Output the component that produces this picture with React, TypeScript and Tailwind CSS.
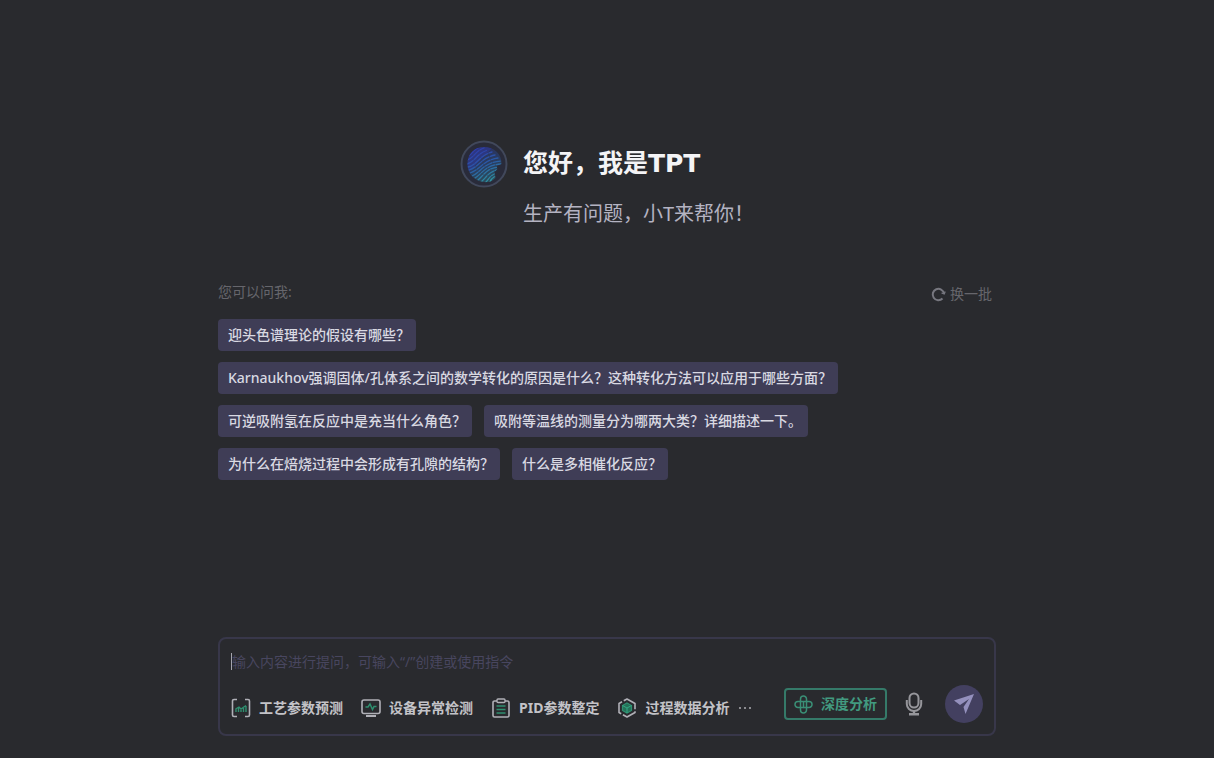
import { useState } from "react";

const FONT = "font-['Noto_Sans','Noto_Sans_CJK_SC',sans-serif]";

const QUESTIONS: string[][] = [
  ["迎头色谱理论的假设有哪些？"],
  ["Karnaukhov强调固体/孔体系之间的数学转化的原因是什么？这种转化方法可以应用于哪些方面？"],
  ["可逆吸附氢在反应中是充当什么角色？", "吸附等温线的测量分为哪两大类？详细描述一下。"],
  ["为什么在焙烧过程中会形成有孔隙的结构？", "什么是多相催化反应？"],
];

function Logo() {
  return (
    <svg width="48" height="48" viewBox="0 0 48 48" fill="none" aria-hidden="true">
      <defs>
        <linearGradient id="print" x1="16" y1="8" x2="30" y2="42" gradientUnits="userSpaceOnUse">
          <stop stopColor="#2f3cae" />
          <stop offset="0.5" stopColor="#2a5aa6" />
          <stop offset="1" stopColor="#2f94a0" />
        </linearGradient>
        <clipPath id="printClip">
          <path d="M24 7C14 7 7.500 14 7.500 24c0 8 5 15 13 17.500 5 1.500 12 .5 15-3.500l-1-6 3-3-1-3 5-2C42 14 34 7 24 7Z" />
        </clipPath>
      </defs>
      <circle cx="24" cy="24" r="22.500" fill="#292b3a" stroke="#41485b" strokeWidth="2" />
      <g clipPath="url(#printClip)">
        <rect x="7" y="7" width="35" height="35" fill="url(#print)" opacity=".35" />
        <path d="M7 7h26L7 34Z" fill="#2d38a0" opacity=".5" />
        <g stroke="url(#print)" strokeWidth="1.300" strokeLinecap="round" strokeDasharray="7 1.500">
          <path d="M8 16c4-1 5-6 10-8M7 20c6-1 8-9 17-12M7 24c8-2 10-11 21-14M8 27c9-2 12-12 24-15M9 30c10-3 12-12 26-15M10 33c10-3 13-13 28-15M12 36c8-3 12-14 29-15M15 38c7-4 10-13 26-14M18 40c5-4 9-12 20-13M22 41c4-3 6-9 15-11M26 42c3-3 4-7 11-9M30 42c1-3 3-5 6-6" />
        </g>
      </g>
    </svg>
  );
}

function PredictIcon() {
  return (
    <svg width="20" height="20" viewBox="0 0 20 20" fill="none" aria-hidden="true">
      <path d="M6 1.500H3A1.500 1.500 0 0 0 1.500 3v14A1.500 1.500 0 0 0 3 18.500h3M14 1.500h3A1.500 1.500 0 0 1 18.500 3v14a1.500 1.500 0 0 1-1.500 1.500h-3" stroke="#b0b0b7" strokeWidth="1.600" />
      <path d="M5 14v-3M7.500 14v-4M10 14v-2M12.500 14v-4M15 14V8M4.500 11l3.500-2 2 2 5-3.500" stroke="#2f8f70" strokeWidth="1.400" />
    </svg>
  );
}

function MonitorIcon() {
  return (
    <svg width="20" height="20" viewBox="0 0 20 20" fill="none" aria-hidden="true">
      <rect x="1" y="2" width="18" height="13.500" rx="2" stroke="#b0b0b7" strokeWidth="1.600" />
      <path d="M5 18h10" stroke="#b0b0b7" strokeWidth="2" />
      <path d="M4.500 9H7l2-3 2.500 5.500L13 8.500h2.500" stroke="#2f8f70" strokeWidth="1.500" />
    </svg>
  );
}

function ClipboardIcon() {
  return (
    <svg width="20" height="20" viewBox="0 0 20 20" fill="none" aria-hidden="true">
      <path d="M6 3H3.500A1.500 1.500 0 0 0 2 4.500v13A1.500 1.500 0 0 0 3.500 19h13a1.500 1.500 0 0 0 1.500-1.500v-13A1.500 1.500 0 0 0 16.500 3H14" stroke="#b0b0b7" strokeWidth="1.600" />
      <rect x="6" y="1" width="8" height="3.500" rx="1" stroke="#b0b0b7" strokeWidth="1.400" />
      <path d="M5.500 8h9M5.500 11.500h9M5.500 15h9" stroke="#2f8f70" strokeWidth="1.500" />
    </svg>
  );
}

function CubeIcon() {
  return (
    <svg width="20" height="20" viewBox="0 0 20 20" fill="none" aria-hidden="true">
      <path d="m10 1 8 4.500v9L10 19l-8-4.500v-9L10 1Z" stroke="#b0b0b7" strokeWidth="1.600" strokeLinejoin="round" strokeDasharray="15 2" />
      <path d="m10 5 4.500 2.500v5L10 15l-4.500-2.500v-5L10 5Z" fill="#257058" stroke="#2f8f70" strokeWidth="1.200" />
      <path d="m5.500 7.500 4.500 2.500 4.500-2.500M10 10v5" stroke="#33a883" />
    </svg>
  );
}

function KnotIcon() {
  return (
    <svg width="19" height="19" viewBox="0 0 19 19" fill="none" stroke="#3a8f76" strokeWidth="1.500" aria-hidden="true">
      <path d="M6.500 12.500V4a3 3 0 0 1 6 0v2.500H4a3 3 0 0 0 0 6h5.500v-6" />
      <path d="M12.500 6.500H15a3 3 0 0 1 0 6H9.500M12.500 6.500V15a3 3 0 0 1-6 0v-2.500" />
    </svg>
  );
}

function MicIcon() {
  return (
    <svg width="18" height="24" viewBox="0 0 18 24" fill="none" stroke="#96969b" aria-hidden="true">
      <rect x="4.500" y="1.500" width="9" height="14" rx="4.500" strokeWidth="2" />
      <path d="M1.800 8v4a7.200 7 0 0 0 14.400 0V8" strokeWidth="2" />
      <path d="M9 18.500V22M4 22.300h10" strokeWidth="2.400" />
    </svg>
  );
}

const TOOLS = [
  { label: "工艺参数预测", Icon: PredictIcon },
  { label: "设备异常检测", Icon: MonitorIcon },
  { label: "PID参数整定", Icon: ClipboardIcon },
  { label: "过程数据分析", Icon: CubeIcon },
];

export default function App() {
  const [text, setText] = useState("");

  return (
    <main className={`flex min-h-screen flex-col bg-[#292a2e] pt-[140px] pb-[22px] text-sm ${FONT}`}>
      <div className="mx-auto flex w-full max-w-[778px] grow flex-col">
        <header className="flex justify-center gap-[15px]">
          <Logo />
          <div>
            <h1 className="flex h-12 items-center font-['DejaVu_Sans','Noto_Sans_CJK_SC',sans-serif] text-[25px] font-bold text-[#f4f4f6]">
              您好，我是TPT
            </h1>
            <p className="mt-3 text-[20px] leading-7 text-[#b4b3c2]">生产有问题，小T来帮你！</p>
          </div>
        </header>

        <section className="mt-[52px]">
          <div className="flex items-center justify-between pr-1 text-[#66666c]">
            <h2>您可以问我:</h2>
            <button className="flex items-center gap-1 pt-1">
              <svg width="15" height="15" viewBox="0 0 15 15" fill="none" stroke="#77777f" strokeWidth="2" aria-hidden="true">
                <path d="M11.500 11.500A5.700 5.700 0 1 1 13 6.500" />
                <path d="m10.500 6 2.700 1L14.200 4.500" strokeWidth="1.300" />
              </svg>
              换一批
            </button>
          </div>
          <div className="mt-[15px] flex flex-col gap-[11px]">
            {QUESTIONS.map((row, i) => (
              <div key={i} className="flex gap-3">
                {row.map((q) => (
                  <button key={q} onClick={() => setText(q)} className="h-8 rounded bg-[#3f3d56] pr-[6px] pl-[10px] font-medium whitespace-nowrap text-[#d9d9e2]">
                    {q}
                  </button>
                ))}
              </div>
            ))}
          </div>
        </section>

        <form onSubmit={(e) => e.preventDefault()} className="mt-auto rounded-lg border-2 border-[#38374a] px-[11px] pt-[10px] pb-[11px]">
          <div className="flex items-center">
            <span className="h-[17px] w-px bg-[#a5a5ad]" />
            <input
              value={text}
              onChange={(e) => setText(e.target.value)}
              aria-label="输入内容进行提问"
              placeholder={'输入内容进行提问，可输入“/”创建或使用指令'}
              className="h-6 grow bg-transparent text-[#d9d9e2] outline-none placeholder:text-[#48465f]"
            />
          </div>
          <div className="mt-3 flex items-center justify-between">
            <div className="flex items-center gap-[18px] pt-2 font-bold text-[#c3c3c8]">
              {TOOLS.map(({ label, Icon }) => (
                <button key={label} type="button" className="flex items-center gap-2">
                  <Icon />
                  {label}
                </button>
              ))}
              <button type="button" aria-label="更多" className="-ml-2 flex gap-[3px]">
                <span className="size-[2px] bg-[#8b8b90]" />
                <span className="size-[2px] bg-[#8b8b90]" />
                <span className="size-[2px] bg-[#8b8b90]" />
              </button>
            </div>
            <div className="flex items-center">
              <button type="button" className="flex h-8 items-center gap-2 rounded border-2 border-[#357a69] px-2 font-bold text-[#429a80]">
                <KnotIcon />
                深度分析
              </button>
              <button type="button" aria-label="语音输入" className="ml-[18px]">
                <MicIcon />
              </button>
              <button type="submit" aria-label="发送" className="ml-[22px] flex size-[38px] items-center justify-center rounded-full bg-[#434060]">
                <svg width="22" height="22" viewBox="0 0 22 22" fill="#9490bd" aria-hidden="true">
                  <path d="M21 1 1 7.500 7 12 16 6l-5.500 8L12.500 21Z" />
                </svg>
              </button>
            </div>
          </div>
        </form>
      </div>
    </main>
  );
}
